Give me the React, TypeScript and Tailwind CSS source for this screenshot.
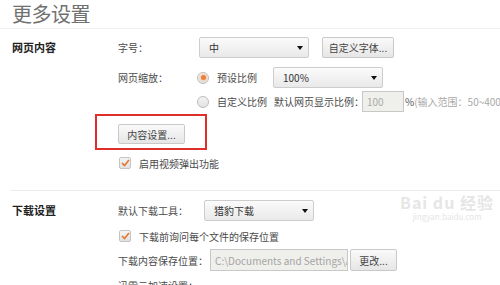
import React from "react";

const Arrow = () => (
  <span className="ml-auto mr-[5px] w-0 h-0 border-l-[3.5px] border-r-[3.5px] border-t-[4px] border-l-transparent border-r-transparent border-t-[#111]" />
);

const Select = ({ value, w }: { value: string; w: string }) => (
  <div
    className={`${w} h-[21px] shrink-0 flex items-center pl-[9px] rounded-[2px] border border-[#cdcdcd] bg-gradient-to-b from-[#fbfbfb] to-[#e9e9e9] text-[#333]`}
  >
    <span>{value}</span>
    <Arrow />
  </div>
);

const Btn = ({ label, w, h = "h-[21px]" }: { label: string; w: string; h?: string }) => (
  <div
    className={`${w} ${h} flex items-center justify-center rounded-[2px] border border-[#c9c9c9] bg-gradient-to-b from-[#fafafa] to-[#e6e6e6] text-[#444]`}
  >
    {label}
  </div>
);

const Radio = ({ on }: { on?: boolean }) => (
  <span className="w-[12px] h-[12px] shrink-0 rounded-full border border-[#bcbcbc] bg-gradient-to-b from-[#f4f4f4] to-[#e2e2e2] flex items-center justify-center">
    {on && <span className="w-[5px] h-[5px] rounded-full bg-[#e9803c] shadow-[0_0_2px_1px_#f6c9a4]" />}
  </span>
);

const Check = () => (
  <span className="w-[12px] h-[12px] rounded-[2px] border border-[#c4c4c4] bg-gradient-to-b from-[#f5f5f5] to-[#e1e1e1] flex items-center justify-center">
    <svg width="9" height="8" viewBox="0 0 9 8">
      <polyline points="1,4 3.5,6.5 8,1" fill="none" stroke="#e27a33" strokeWidth="1.7" />
    </svg>
  </span>
);

export default function App() {
  return (
    <div
      className="relative w-[500px] h-[285px] overflow-hidden bg-white text-[10px] text-[#4a4a4a]"
      style={{ fontFamily: '"Noto Sans CJK SC", "Noto Sans", sans-serif' }}
    >
      {/* title */}
      <div className="h-[29px] pl-[12px] border-b border-[#f0f0f0]">
        <div className="text-[20px] leading-[28px] text-[#707070] tracking-[-0.5px]">更多设置</div>
      </div>

      {/* 网页内容 */}
      <div className="flex pt-[8px]">
        <div className="w-[118px] shrink-0 pl-[12px] h-[21px] leading-[21px] font-bold text-[11px] text-[#222]">网页内容</div>
        <div className="flex flex-col min-w-0">
          <div className="flex items-center h-[21px]">
            <span className="w-[81px] shrink-0">字号：</span>
            <Select value="中" w="w-[110px]" />
            <div className="ml-[13px] shrink-0">
              <Btn label="自定义字体..." w="w-[72px]" />
            </div>
          </div>

          <div className="flex items-center h-[21px] mt-[9px]">
            <span className="w-[79px] shrink-0">网页缩放：</span>
            <Radio on />
            <span className="ml-[8px] w-[56px] shrink-0">预设比例</span>
            <Select value="100%" w="w-[110px]" />
          </div>

          <div className="flex items-center h-[21px] mt-[3px] whitespace-nowrap">
            <span className="w-[79px] shrink-0" />
            <Radio />
            <span className="ml-[8px] w-[57px] shrink-0">自定义比例</span>
            <span className="w-[88px] shrink-0">默认网页显示比例：</span>
            <div className="w-[42px] shrink-0 h-[21px] flex items-center pl-[4px] border border-[#c8c8c8] bg-[#efefec] text-[#ababab]">100</div>
            <span className="ml-[1px] text-[#555]">%</span>
            <span className="text-[#a8a8a8]">(输入范围：50~400%)</span>
          </div>

          <div className="relative mt-[12px] w-[67px]">
            <Btn label="内容设置..." w="w-[67px]" h="h-[20px]" />
            <div className="absolute left-[-23px] top-[-10px] w-[112px] h-[36px] border-2 border-[#e02f2b]" />
          </div>

          <div className="flex items-center h-[14px] mt-[12px]">
            <span className="ml-[1px]"><Check /></span>
            <span className="ml-[8px]">启用视频弹出功能</span>
          </div>
        </div>
      </div>

      <div className="ml-[10px] mt-[20px] border-t border-[#ececec]" />

      {/* 下载设置 */}
      <div className="flex pt-[9px]">
        <div className="w-[118px] shrink-0 pl-[12px] h-[21px] leading-[21px] font-bold text-[11px] text-[#222]">下载设置</div>
        <div className="flex flex-col min-w-0">
          <div className="flex items-center h-[21px]">
            <span className="w-[86px] shrink-0">默认下载工具：</span>
            <Select value="猎豹下载" w="w-[110px]" />
          </div>

          <div className="flex items-center h-[14px] mt-[8px]">
            <span className="ml-[1px]"><Check /></span>
            <span className="ml-[8px]">下载前询问每个文件的保存位置</span>
          </div>

          <div className="flex items-center h-[22px] mt-[6px] whitespace-nowrap">
            <span className="w-[92px] shrink-0">下载内容保存位置：</span>
            <div className="w-[138px] shrink-0 h-[22px] flex items-center pl-[4px] overflow-hidden border border-[#c8c8c8] bg-[#efefec] text-[#a5a5a5]">
              C:\Documents and Settings\A
            </div>
            <div className="ml-[2px] shrink-0">
              <Btn label="更改..." w="w-[47px]" h="h-[22px]" />
            </div>
          </div>

          <div className="mt-[8px] h-[14px] leading-[14px]">迅雷云加速设置：</div>
        </div>
      </div>

      {/* watermark */}
      <div className="absolute left-[400px] top-[192px] flex flex-col items-center whitespace-nowrap text-[#e6e6e6] pointer-events-none">
        <div className="text-[16px] leading-[20px] font-bold tracking-[1px]">Bai du 经验</div>
        <div className="text-[8px] leading-[10px]">jingyan.baidu.com</div>
      </div>
    </div>
  );
}
